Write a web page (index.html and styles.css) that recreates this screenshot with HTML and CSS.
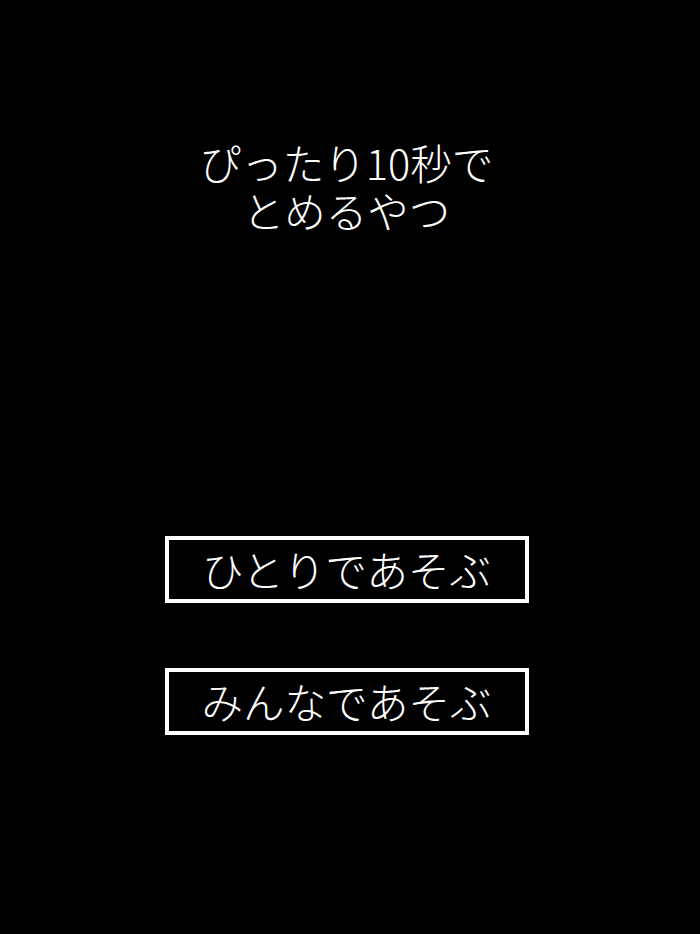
FILE: index.html
```html
<!DOCTYPE html>
<html lang="ja">
<head>
<meta charset="utf-8">
<title>ぴったり10秒でとめるやつ</title>
<link rel="stylesheet" href="styles.css">
</head>
<body>
<main class="screen">
  <h1 class="title">
    <span class="title-line">ぴったり10秒で</span>
    <span class="title-line">とめるやつ</span>
  </h1>
  <div class="menu">
    <button class="menu-btn" type="button">ひとりであそぶ</button>
    <button class="menu-btn" type="button">みんなであそぶ</button>
  </div>
</main>
</body>
</html>
```
FILE: styles.css
```css
html, body {
  margin: 0;
  padding: 0;
  background: #000;
}
body {
  width: 700px;
  height: 934px;
  overflow: hidden;
  font-family: "Noto Sans CJK JP", "Noto Sans", sans-serif;
  color: #fff;
}
.screen {
  display: flex;
  flex-direction: column;
  align-items: center;
  padding-right: 7px;
  padding-top: 138px;
}
.title {
  margin: 0;
  font-size: 41.5px;
  font-weight: 300;
  text-align: center;
  display: flex;
  flex-direction: column;
  align-items: center;
}
.title-line {
  display: block;
  height: 48px;
  line-height: 48px;
}
.menu {
  margin-top: 302px;
  display: flex;
  flex-direction: column;
  gap: 65px;
}
.menu-btn {
  box-sizing: border-box;
  width: 364px;
  height: 67px;
  border: 4px solid #fff;
  background: #000;
  color: #fff;
  font-family: "Noto Sans CJK JP", sans-serif;
  font-size: 41.5px;
  font-weight: 300;
  line-height: 1;
  padding: 0;
  display: flex;
  align-items: center;
  justify-content: center;
}
```
